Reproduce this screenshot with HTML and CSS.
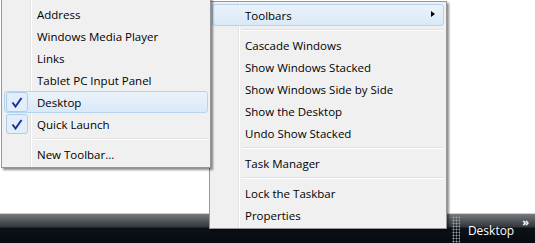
FILE: index.html
```html
<!DOCTYPE html>
<html lang="en">
<head>
    <meta charset="UTF-8">
    <title>Taskbar menu</title>
    <link rel="stylesheet" href="styles.css">
</head>
<body>

<div class="desktop">
    <div class="screen"></div>
    <div class="taskbar">
        <div class="gripper"></div>
        <span class="band-name">Desktop</span>
        <span class="chevron">&raquo;</span>
    </div>
</div>

<ul class="menu menu-toolbars">
    <li class="item">Address</li>
    <li class="item">Windows Media Player</li>
    <li class="item">Links</li>
    <li class="item">Tablet PC Input Panel</li>
    <li class="item checked hot"><span class="check"><svg width="12" height="11" viewBox="0 0 12 11"><path d="M1.5 5.5 L4.5 9.5 L10.5 1" fill="none" stroke="#17359a" stroke-width="2"/></svg></span>Desktop</li>
    <li class="item checked"><span class="check"><svg width="12" height="11" viewBox="0 0 12 11"><path d="M1.5 5.5 L4.5 9.5 L10.5 1" fill="none" stroke="#17359a" stroke-width="2"/></svg></span>Quick Launch</li>
    <li class="sep"></li>
    <li class="item">New Toolbar...</li>
</ul>

<ul class="menu menu-taskbar">
    <li class="item hot submenu">Toolbars</li>
    <li class="sep"></li>
    <li class="item">Cascade Windows</li>
    <li class="item">Show Windows Stacked</li>
    <li class="item">Show Windows Side by Side</li>
    <li class="item">Show the Desktop</li>
    <li class="item">Undo Show Stacked</li>
    <li class="sep"></li>
    <li class="item">Task Manager</li>
    <li class="sep"></li>
    <li class="item">Lock the Taskbar</li>
    <li class="item">Properties</li>
</ul>

</body>
</html>
```

FILE: styles.css
```css
/* Vista style taskbar context menu */
body { margin: 0; font-family: "Open Sans", "Noto Sans", sans-serif; font-size: 11.5px; background: #fff; overflow: hidden; }
.desktop { display: flex; flex-direction: column; height: 243px; width: 535px; }
.screen { flex: 1; background: #fff; }

.taskbar { height: 30px; box-sizing: border-box; border-top: 1px solid #cfd1d3; display: flex; justify-content: flex-end; align-items: stretch; padding-right: 6px;
    background: linear-gradient(to bottom, #767a7e 0px, #55595e 6px, #33373c 13px, #0c1218 14px, #060a10 30px); }
.gripper { width: 8px; margin-right: 8px; background-image: radial-gradient(circle, #9aa0a6 0.8px, transparent 1.2px); background-size: 3px 3px; margin-top: 2px; }
.band-name { color: #fff; font-size: 12px; align-self: center; margin-top: 3px; }
.chevron { color: #fff; font-size: 11px; font-weight: bold; margin-left: 8px; line-height: 1; margin-top: 2px; }

.menu { position: absolute; list-style: none; margin: 0; padding: 2px; background: #f0f0f0; border: 1px solid #979797; box-shadow: 2px 2px 2px rgba(0,0,0,0.45); }
.menu::before { content: ""; position: absolute; top: 0; bottom: 0; left: 28px; width: 2px; background: linear-gradient(to right, #e2e3e3 1px, #fff 1px); }
.menu-taskbar { left: 209px; top: 1px; width: 232px; z-index: 1; }
.menu-toolbars { left: 1px; top: -2px; width: 204px; padding-top: 4px; z-index: 2; }

.item { position: relative; height: 22px; line-height: 21px; padding-left: 32px; color: #000; white-space: nowrap; border: 1px solid transparent; box-sizing: border-box; border-radius: 3px; }
.item.hot { background: linear-gradient(to bottom, rgba(232,243,252,0.85), rgba(214,232,248,0.85)); border-color: #b6d4ee; }
.submenu::after { content: ""; position: absolute; right: 8px; top: 6px; border-left: 4px solid #000; border-top: 3.5px solid transparent; border-bottom: 3.5px solid transparent; }
.sep { height: 8px; box-sizing: border-box; padding-top: 3px; position: relative; z-index: 1; }
.sep::after { content: ""; display: block; margin-left: 30px; height: 1px; background: #e0e0e0; border-bottom: 1px solid #fff; }

.check { position: absolute; left: 1px; top: 0px; width: 20px; height: 18px; border: 1px solid #aeccea; border-radius: 3px; background: #e3eefa; display: flex; align-items: center; justify-content: center; }
```
